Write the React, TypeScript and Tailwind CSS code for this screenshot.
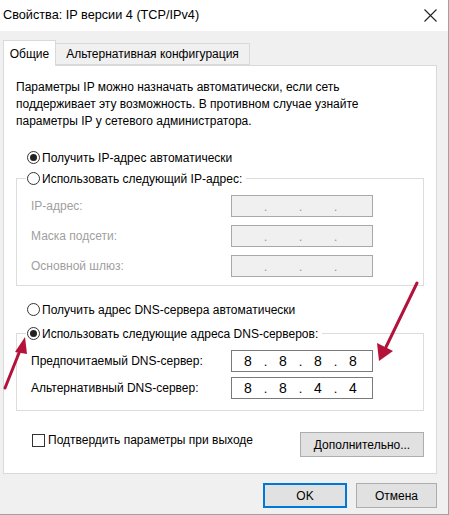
const FONT = { fontFamily: '"Liberation Sans", Arial, sans-serif' };

function Radio({ checked, label }: { checked?: boolean; label: string }) {
  return (
    <div className="flex items-center h-[17px] gap-[2px]">
      <span className="w-[13px] h-[13px] rounded-full border border-[#333] bg-white flex items-center justify-center">
        {checked && <span className="w-[7px] h-[7px] rounded-full bg-[#222]" />}
      </span>
      <span className="text-[12px] text-black whitespace-nowrap">{label}</span>
    </div>
  );
}

function IpBox({ values, disabled }: { values: string[]; disabled?: boolean }) {
  const box = disabled ? 'bg-[#f0f0f0] border-[#a8a8a8] text-[#9a9a9a]' : 'bg-white border-[#7a7a7a] text-black';
  return (
    <div className={`w-[142px] h-[22px] border flex items-center pl-[1px] ${box}`}>
      {values.map((v, i) => (
        <div key={i} className="flex items-center">
          {i > 0 && <span className="w-[5px] text-center text-[13px] leading-none">.</span>}
          <span className="w-[30px] text-center text-[14px] leading-none">{v}</span>
        </div>
      ))}
    </div>
  );
}

function Row({ label, values, disabled }: { label: string; values: string[]; disabled?: boolean }) {
  return (
    <div className="flex items-center h-[22px]">
      <span className={`w-[200px] text-[12px] ${disabled ? 'text-[#a0a0a0]' : 'text-black'}`}>{label}</span>
      <IpBox values={values} disabled={disabled} />
    </div>
  );
}

function Btn({ children, primary, w }: { children: string; primary?: boolean; w: string }) {
  return (
    <button className={`${w} h-[25px] bg-[#e1e1e1] text-[12px] text-black ${primary ? 'border-2 border-[#0078d7]' : 'border border-[#adadad]'}`}>
      {children}
    </button>
  );
}

export default function App() {
  return (
    <div className="relative w-[449px] h-[515px] bg-[#f0f0f0] border-r border-b border-[#a0a0a0] overflow-hidden" style={FONT}>
      <div className="h-[31px] bg-white flex items-center justify-between pl-[3px] pr-[11px]">
        <span className="text-[12.7px] text-black">Свойства: IP версии 4 (TCP/IPv4)</span>
        <svg width="13" height="13" viewBox="0 0 13 13">
          <path d="M0.5 0.5 L12.5 12.5 M12.5 0.5 L0.5 12.5" stroke="#222" strokeWidth="1.1" />
        </svg>
      </div>

      <div className="pt-[8px] pl-[3px]">
        <div className="flex items-end h-[26px]">
          <div className="relative z-10 -mb-px w-[53px] h-[26px] bg-white border border-b-0 border-[#d9d9d9] flex items-center justify-center text-[12px] text-black">
            Общие
          </div>
          <div className="w-[194px] h-[22px] border border-l-0 border-[#d9d9d9] bg-[#f0f0f0] flex items-center justify-center text-[12px] text-black">
            Альтернативная конфигурация
          </div>
        </div>

        <div className="w-[434px] h-[409px] bg-white border border-[#d9d9d9] px-[12px] pt-[13px]">
          <p className="text-[12px] leading-[17px] text-black">
            Параметры IP можно назначать автоматически, если сеть<br />
            поддерживает эту возможность. В противном случае узнайте<br />
            параметры IP у сетевого администратора.
          </p>

          <div className="mt-[19px] pl-[11px]">
            <Radio checked label="Получить IP-адрес автоматически" />
          </div>

          <fieldset className="mt-[4px] border border-[#dcdcdc] px-[14px] pt-[8px] pb-[8px] flex flex-col gap-[8px]">
            <legend className="-ml-[5px] px-[1px] pr-[4px]">
              <Radio label="Использовать следующий IP-адрес:" />
            </legend>
            <Row label="IP-адрес:" values={['', '', '', '']} disabled />
            <Row label="Маска подсети:" values={['', '', '', '']} disabled />
            <Row label="Основной шлюз:" values={['', '', '', '']} disabled />
          </fieldset>

          <div className="mt-[15px] pl-[11px]">
            <Radio label="Получить адрес DNS-сервера автоматически" />
          </div>

          <fieldset className="mt-[7px] border border-[#dcdcdc] px-[14px] pt-[8px] pb-[11px] flex flex-col gap-[5px]">
            <legend className="-ml-[5px] px-[1px] pr-[4px]">
              <Radio checked label="Использовать следующие адреса DNS-серверов:" />
            </legend>
            <Row label="Предпочитаемый DNS-сервер:" values={['8', '8', '8', '8']} />
            <Row label="Альтернативный DNS-сервер:" values={['8', '8', '4', '4']} />
          </fieldset>

          <div className="mt-[21px] flex justify-between items-start">
            <label className="ml-[16px] mt-[1px] flex items-center gap-[3px] h-[14px]">
              <span className="w-[13px] h-[13px] border border-[#333] bg-white" />
              <span className="text-[12px] text-black">Подтвердить параметры при выходе</span>
            </label>
            <Btn w="w-[124px]">Дополнительно...</Btn>
          </div>
        </div>

        <div className="mt-[9px] pr-[11px] flex justify-end gap-[9px]">
          <Btn primary w="w-[84px]">OK</Btn>
          <Btn w="w-[81px]">Отмена</Btn>
        </div>
      </div>

      <svg className="absolute inset-0 pointer-events-none" width="449" height="515">
        <line x1="5" y1="388" x2="21" y2="348" stroke="#b3133b" strokeWidth="3" strokeLinecap="round" />
        <polygon points="25,337 15,352 27,354" fill="#b3133b" />
        <line x1="417" y1="283" x2="386" y2="347" stroke="#b3133b" strokeWidth="3" strokeLinecap="round" />
        <polygon points="379,361 377,343 393,351" fill="#b3133b" />
      </svg>
    </div>
  );
}
